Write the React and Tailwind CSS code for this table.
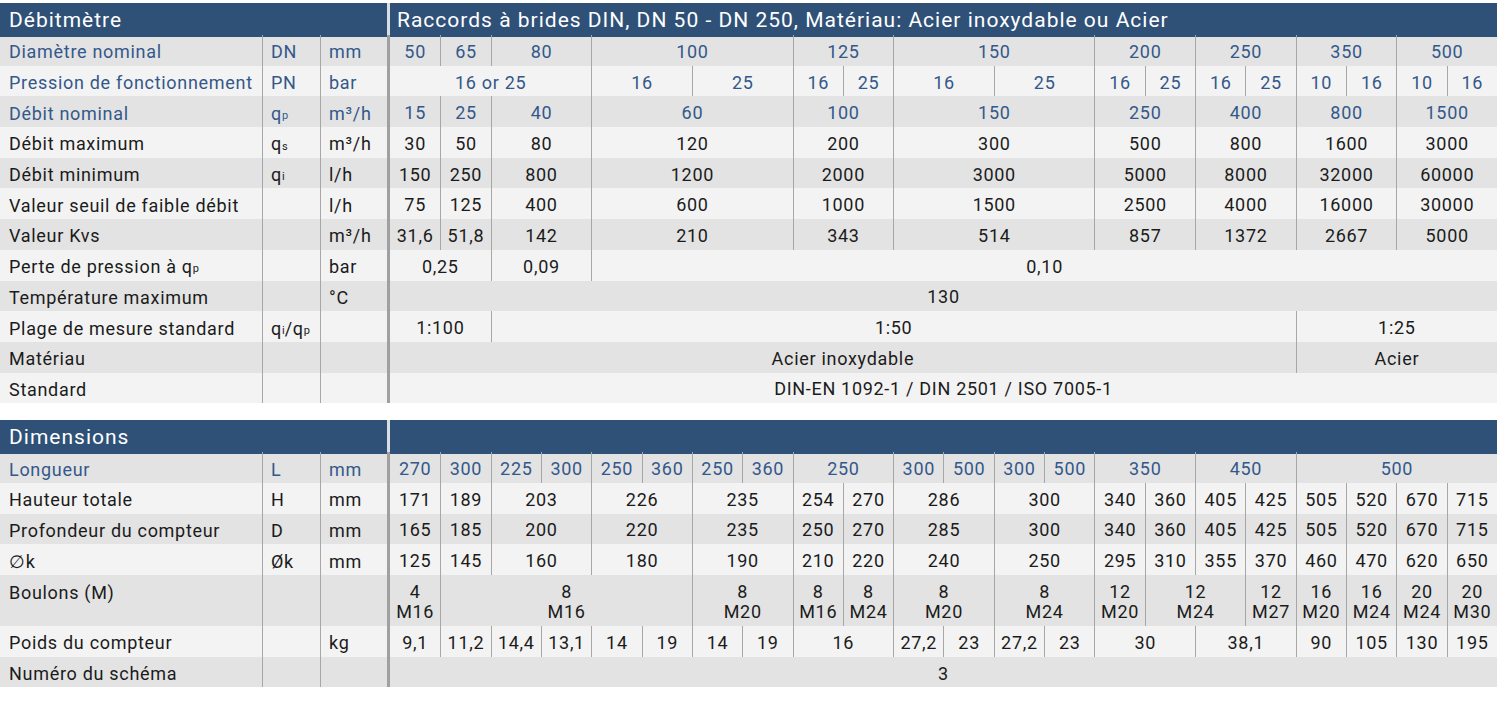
import clsx from "clsx";

// grid: label | symbol | unit | separator | 22 data slots
const GRID =
  "grid w-[1497px] grid-cols-[263px_58px_66px_3px_repeat(22,minmax(0,1fr))]";

const SPAN = {
  1: "col-span-1",
  2: "col-span-2",
  4: "col-span-4",
  5: "col-span-5",
  16: "col-span-16",
  18: "col-span-18",
  22: "col-span-22",
};

const q = (s) => (
  <>
    q<sub className="text-[11px] tracking-normal">{s}</sub>
  </>
);

const topRows = [
  {
    label: "Diamètre nominal",
    sym: "DN",
    unit: "mm",
    blue: true,
    cells: [["50", 1], ["65", 1], ["80", 2], ["100", 4], ["125", 2], ["150", 4], ["200", 2], ["250", 2], ["350", 2], ["500", 2]],
  },
  {
    label: "Pression de fonctionnement",
    sym: "PN",
    unit: "bar",
    blue: true,
    cells: [["16 or 25", 4], ["16", 2], ["25", 2], ["16", 1], ["25", 1], ["16", 2], ["25", 2], ["16", 1], ["25", 1], ["16", 1], ["25", 1], ["10", 1], ["16", 1], ["10", 1], ["16", 1]],
  },
  {
    label: "Débit nominal",
    sym: q("p"),
    unit: "m³/h",
    blue: true,
    cells: [["15", 1], ["25", 1], ["40", 2], ["60", 4], ["100", 2], ["150", 4], ["250", 2], ["400", 2], ["800", 2], ["1500", 2]],
  },
  {
    label: "Débit maximum",
    sym: q("s"),
    unit: "m³/h",
    cells: [["30", 1], ["50", 1], ["80", 2], ["120", 4], ["200", 2], ["300", 4], ["500", 2], ["800", 2], ["1600", 2], ["3000", 2]],
  },
  {
    label: "Débit minimum",
    sym: q("i"),
    unit: "l/h",
    cells: [["150", 1], ["250", 1], ["800", 2], ["1200", 4], ["2000", 2], ["3000", 4], ["5000", 2], ["8000", 2], ["32000", 2], ["60000", 2]],
  },
  {
    label: "Valeur seuil de faible débit",
    unit: "l/h",
    cells: [["75", 1], ["125", 1], ["400", 2], ["600", 4], ["1000", 2], ["1500", 4], ["2500", 2], ["4000", 2], ["16000", 2], ["30000", 2]],
  },
  {
    label: "Valeur Kvs",
    unit: "m³/h",
    cells: [["31,6", 1], ["51,8", 1], ["142", 2], ["210", 4], ["343", 2], ["514", 4], ["857", 2], ["1372", 2], ["2667", 2], ["5000", 2]],
  },
  {
    label: <>Perte de pression à {q("p")}</>,
    unit: "bar",
    cells: [["0,25", 2], ["0,09", 2], ["0,10", 18]],
  },
  { label: "Température maximum", unit: "°C", cells: [["130", 22]] },
  {
    label: "Plage de mesure standard",
    sym: (
      <>
        {q("i")}/{q("p")}
      </>
    ),
    cells: [["1:100", 2], ["1:50", 16], ["1:25", 4]],
  },
  { label: "Matériau", cells: [["Acier inoxydable", 18], ["Acier", 4]] },
  { label: "Standard", cells: [["DIN-EN 1092-1 / DIN 2501 / ISO 7005-1", 22]] },
];

const bottomRows = [
  {
    label: "Longueur",
    sym: "L",
    unit: "mm",
    blue: true,
    cells: [["270", 1], ["300", 1], ["225", 1], ["300", 1], ["250", 1], ["360", 1], ["250", 1], ["360", 1], ["250", 2], ["300", 1], ["500", 1], ["300", 1], ["500", 1], ["350", 2], ["450", 2], ["500", 4]],
  },
  {
    label: "Hauteur totale",
    sym: "H",
    unit: "mm",
    cells: [["171", 1], ["189", 1], ["203", 2], ["226", 2], ["235", 2], ["254", 1], ["270", 1], ["286", 2], ["300", 2], ["340", 1], ["360", 1], ["405", 1], ["425", 1], ["505", 1], ["520", 1], ["670", 1], ["715", 1]],
  },
  {
    label: "Profondeur du compteur",
    sym: "D",
    unit: "mm",
    cells: [["165", 1], ["185", 1], ["200", 2], ["220", 2], ["235", 2], ["250", 1], ["270", 1], ["285", 2], ["300", 2], ["340", 1], ["360", 1], ["405", 1], ["425", 1], ["505", 1], ["520", 1], ["670", 1], ["715", 1]],
  },
  {
    label: "∅k",
    sym: "Øk",
    unit: "mm",
    cells: [["125", 1], ["145", 1], ["160", 2], ["180", 2], ["190", 2], ["210", 1], ["220", 1], ["240", 2], ["250", 2], ["295", 1], ["310", 1], ["355", 1], ["370", 1], ["460", 1], ["470", 1], ["620", 1], ["650", 1]],
  },
  {
    label: "Boulons (M)",
    tall: true,
    cells: [["4\nM16", 1], ["8\nM16", 5], ["8\nM20", 2], ["8\nM16", 1], ["8\nM24", 1], ["8\nM20", 2], ["8\nM24", 2], ["12\nM20", 1], ["12\nM24", 2], ["12\nM27", 1], ["16\nM20", 1], ["16\nM24", 1], ["20\nM24", 1], ["20\nM30", 1]],
  },
  {
    label: "Poids du compteur",
    unit: "kg",
    cells: [["9,1", 1], ["11,2", 1], ["14,4", 1], ["13,1", 1], ["14", 1], ["19", 1], ["14", 1], ["19", 1], ["16", 2], ["27,2", 1], ["23", 1], ["27,2", 1], ["23", 1], ["30", 2], ["38,1", 2], ["90", 1], ["105", 1], ["130", 1], ["195", 1]],
  },
  { label: "Numéro du schéma", cells: [["3", 22]] },
];

const Header = ({ title, right }) => (
  <div className={clsx(GRID, "h-[32px] text-white text-[21px] tracking-[1px]")}>
    <div className="col-span-3 bg-[#2f5178] flex items-center pl-[9px] pt-[2px]">{title}</div>
    <div className="bg-[#d9dee5]" />
    <div className="col-span-22 bg-[#2f5178] flex items-center pl-[7px] pt-[2px]">{right}</div>
  </div>
);

const Row = ({ row, dark }) => (
  <div
    className={clsx(
      GRID,
      row.tall ? "h-[51px]" : "h-[30.7px]",
      dark ? "bg-[#e3e3e3]" : "bg-[#f3f3f3]",
      row.blue ? "text-[#33588a]" : "text-[#1b1b1b]"
    )}
  >
    <div
      className={clsx(
        "flex pl-[9px] border-r border-[#a7a7a7] whitespace-nowrap",
        row.tall ? "items-start pt-[4px]" : "items-center pt-[3px]"
      )}
    >
      {row.label}
    </div>
    <div
      className={clsx(
        "flex pl-[8px] border-r border-[#a7a7a7] whitespace-nowrap",
        row.tall ? "items-start pt-[4px]" : "items-center pt-[3px]"
      )}
    >
      {row.sym}
    </div>
    <div className="flex items-center pl-[8px] pt-[3px]">{row.unit}</div>
    <div className="bg-[#a0a0a0]" />
    {row.cells.map(([v, span], i) => (
      <div
        key={i}
        className={clsx(
          SPAN[span],
          "flex items-center justify-center pt-[3px] text-center whitespace-pre-line leading-[20px]",
          i > 0 && "border-l border-[#a7a7a7]"
        )}
      >
        {v}
      </div>
    ))}
  </div>
);

export default function App() {
  return (
    <div className="min-h-screen bg-white pt-[3px] font-['Roboto',sans-serif] text-[18px] tracking-[0.7px]">
      <Header
        title="Débitmètre"
        right="Raccords à brides DIN, DN 50 - DN 250, Matériau: Acier inoxydable ou Acier"
      />
      {topRows.map((row, i) => (
        <Row key={i} row={row} dark={i % 2 === 0} />
      ))}

      <div className="mt-[17px]">
        <Header title="Dimensions" />
        {bottomRows.map((row, i) => (
          <Row key={i} row={row} dark={i % 2 === 0} />
        ))}
      </div>
    </div>
  );
}
